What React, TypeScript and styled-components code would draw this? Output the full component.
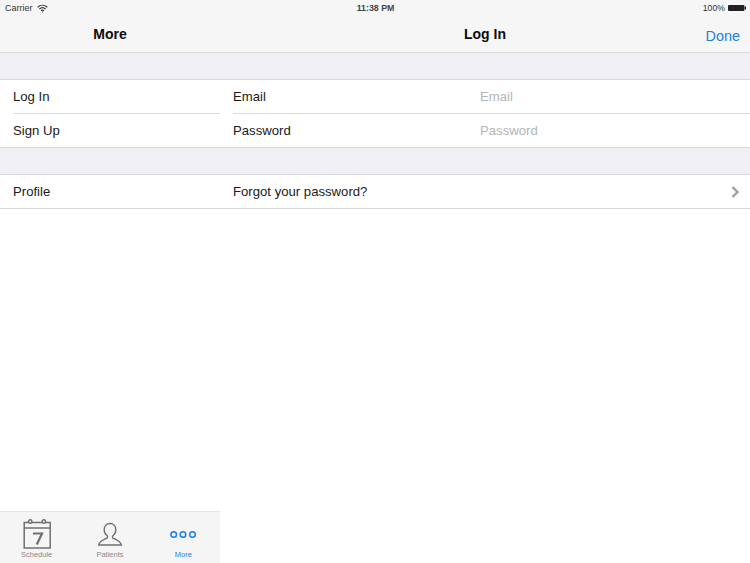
import React from "react";
import styled, { createGlobalStyle } from "styled-components";

const GlobalStyle = createGlobalStyle`
  html, body {
    margin: 0;
    padding: 0;
    background: #fff;
  }
  body {
    font-family: "Liberation Sans", Arial, sans-serif;
    -webkit-font-smoothing: antialiased;
  }
`;

const Screen = styled.div`
  width: 750px;
  height: 563px;
  display: flex;
  flex-direction: column;
  overflow: hidden;
  background: #fff;
  color: #1a1a1a;
`;

const StatusBar = styled.div`
  height: 16px;
  flex: none;
  display: grid;
  grid-template-columns: 1fr auto 1fr;
  align-items: center;
  padding: 0 4px 0 5px;
  background: #f6f6f6;
  font-size: 9px;
  color: #333;
`;

const StatusLeft = styled.div`
  display: flex;
  align-items: center;
  gap: 4px;
`;

const StatusRight = styled.div`
  display: flex;
  align-items: center;
  justify-content: flex-end;
  gap: 3px;
  font-size: 8.7px;
`;

const Clock = styled.div`
  font-weight: 700;
  font-size: 8.8px;
  color: #444;
`;

const Panes = styled.div`
  flex: 1;
  display: grid;
  grid-template-columns: 220px 530px;
  min-height: 0;
`;

const Pane = styled.div`
  display: flex;
  flex-direction: column;
  min-height: 0;
`;

const NavBar = styled.div`
  position: relative;
  height: 37px;
  flex: none;
  display: flex;
  align-items: center;
  justify-content: center;
  padding-bottom: 1px;
  box-sizing: border-box;
  background: #f6f6f6;
  border-bottom: 1px solid #d8d8dc;
`;

const NavTitle = styled.div`
  font-size: 14px;
  font-weight: 700;
  color: #0c0c0c;
`;

const DoneButton = styled.button`
  position: absolute;
  right: 10px;
  top: 11px;
  border: 0;
  padding: 0;
  background: none;
  font: inherit;
  font-size: 14.4px;
  line-height: 18px;
  color: #1a7ee6;
`;

const Band = styled.div`
  height: 26px;
  flex: none;
  background: #efeff4;
`;

const Group = styled.div`
  flex: none;
  border-top: 1px solid #d9d9dd;
  border-bottom: 1px solid #d9d9dd;
  background: #fff;
`;

const Row = styled.div<{ $divider?: boolean }>`
  position: relative;
  height: 33px;
  display: flex;
  align-items: center;
  padding-left: 13px;
  padding-right: 10px;
  font-size: 13.15px;
  margin-bottom: ${(p) => (p.$divider ? "1px" : "0")};

  &::after {
    content: "";
    display: ${(p) => (p.$divider ? "block" : "none")};
    position: absolute;
    left: 13px;
    right: 0;
    bottom: -1px;
    height: 1px;
    background: #dcdce0;
  }
`;

const RowLabel = styled.div`
  width: 247px;
  flex: none;
`;

const Placeholder = styled.div`
  color: #b4b4b8;
`;

const Chevron = styled.svg`
  margin-left: auto;
`;

const Spacer = styled.div`
  flex: 1;
`;

const TabBar = styled.div`
  height: 52px;
  flex: none;
  box-sizing: border-box;
  display: grid;
  grid-template-columns: repeat(3, 1fr);
  background: #f5f5f5;
  border-top: 1px solid #e4e4e4;
`;

const Tab = styled.div<{ $active?: boolean }>`
  display: flex;
  flex-direction: column;
  align-items: center;
  justify-content: flex-end;
  padding-bottom: 4px;
  font-size: 7.5px;
  color: ${(p) => (p.$active ? "#1a7ee6" : "#8a8a8a")};
`;

const Wifi = () => (
  <svg width="11" height="9" viewBox="0 0 11 9" fill="none" stroke="#333" strokeWidth="1.2">
    <path d="M.7 3.2c2.8-2.6 6.8-2.6 9.6 0" />
    <path d="M2.4 5c1.8-1.6 4.4-1.6 6.2 0" />
    <path d="M4 6.6c.9-.7 2.1-.7 3 0" />
    <path d="M5.5 8.8 4.5 7.5h2z" fill="#333" stroke="none" />
  </svg>
);

const Battery = () => (
  <svg width="18" height="6" viewBox="0 0 18 6">
    <rect x="0" y="0" width="16.4" height="6" rx="1" fill="#222" />
    <rect x="16.6" y="1.5" width="1.4" height="3" fill="#222" />
  </svg>
);

const CalendarIcon = () => (
  <svg width="30" height="32" viewBox="0 0 30 32" fill="none" stroke="#707070" strokeWidth="1.5">
    <rect x="2.2" y="4.5" width="26" height="25.5" />
    <path d="M2.2 10h26" />
    <circle cx="8.2" cy="3.5" r="1.7" fill="#f5f5f5" />
    <circle cx="21.8" cy="3.5" r="1.7" fill="#f5f5f5" />
    <path d="M11 15.5h9l-5.2 11" strokeWidth="2.2" />
  </svg>
);

const PersonIcon = () => (
  <svg width="26" height="32" viewBox="0 0 26 32" fill="none" stroke="#707070" strokeWidth="1.4">
    <path d="M13 5.5c-3.4 0-5.800 2.600-5.800 6.200 0 2.800 1.400 5 2.900 6.100.7.7.6 1.900-.4 2.500-1.700 1-7 2.200-8 6.700h22.600c-1-4.500-6.300-5.700-8-6.700-1-.6-1.100-1.800-.4-2.500 1.500-1.100 2.900-3.300 2.900-6.100 0-3.600-2.400-6.200-5.800-6.200z" />
  </svg>
);

const DotsIcon = () => (
  <svg width="28" height="32" viewBox="0 0 28 32" fill="none" stroke="#1a7ee6" strokeWidth="1.5">
    <circle cx="4.7" cy="16.5" r="2.8" />
    <circle cx="14" cy="16.5" r="2.8" />
    <circle cx="23.5" cy="16.5" r="2.8" />
  </svg>
);

const App = () => (
  <>
    <GlobalStyle />
    <Screen>
      <StatusBar>
        <StatusLeft>
          Carrier
          <Wifi />
        </StatusLeft>
        <Clock>11:38 PM</Clock>
        <StatusRight>
          100%
          <Battery />
        </StatusRight>
      </StatusBar>
      <Panes>
        <Pane>
          <NavBar>
            <NavTitle>More</NavTitle>
          </NavBar>
          <Band />
          <Group>
            <Row $divider>Log In</Row>
            <Row>Sign Up</Row>
          </Group>
          <Band />
          <Group>
            <Row>Profile</Row>
          </Group>
          <Spacer />
          <TabBar>
            <Tab>
              <CalendarIcon />
              Schedule
            </Tab>
            <Tab>
              <PersonIcon />
              Patients
            </Tab>
            <Tab $active>
              <DotsIcon />
              More
            </Tab>
          </TabBar>
        </Pane>
        <Pane>
          <NavBar>
            <NavTitle>Log In</NavTitle>
            <DoneButton>Done</DoneButton>
          </NavBar>
          <Band />
          <Group>
            <Row $divider>
              <RowLabel>Email</RowLabel>
              <Placeholder>Email</Placeholder>
            </Row>
            <Row>
              <RowLabel>Password</RowLabel>
              <Placeholder>Password</Placeholder>
            </Row>
          </Group>
          <Band />
          <Group>
            <Row>
              Forgot your password?
              <Chevron width="9" height="12" viewBox="0 0 9 12" fill="none" stroke="#9a9a9e" strokeWidth="2.2">
                <path d="M1.5 1l5 5-5 5" />
              </Chevron>
            </Row>
          </Group>
        </Pane>
      </Panes>
    </Screen>
  </>
);

export default App;
